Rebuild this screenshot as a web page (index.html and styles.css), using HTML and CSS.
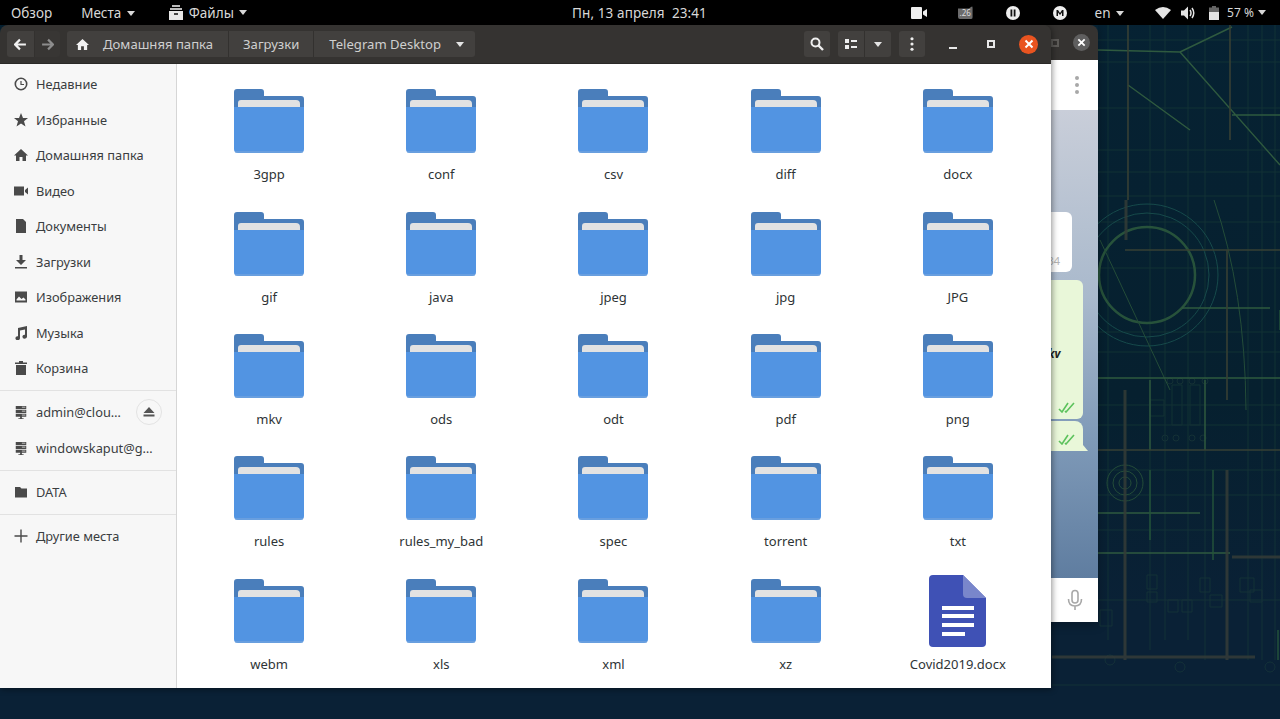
FILE: index.html
```html
<!DOCTYPE html>
<html lang="ru">
<head>
<meta charset="utf-8">
<title>Файлы</title>
<link rel="stylesheet" href="styles.css">
</head>
<body>
<svg class="defs" width="0" height="0">
  <defs>
    <filter id="soft"><feGaussianBlur stdDeviation="0.6"/></filter>
    <symbol id="folder" viewBox="0 0 70 64">
      <path d="M3 0H27Q30 0 30 3V7H67Q70 7 70 10V30H0V3Q0 0 3 0Z" fill="#4a7ebb"/>
      <path d="M7 11H62Q66 11 66 15V22H4V14Q4 11 7 11Z" fill="#e2e2e2"/>
      <path d="M0 18H70V60Q70 64 66 64H4Q0 64 0 60Z" fill="#5294e2"/>
      <path d="M1 63H69" stroke="#7fa9dc" stroke-width="1"/>
    </symbol>
    <symbol id="home" viewBox="0 0 14 14"><path d="M7 1 14 7.5H12V13H8.5V9H5.5V13H2V7.5H0Z" fill="currentColor"/></symbol>
    <symbol id="server" viewBox="0 0 14 16"><path d="M1 1H13V4.500H1ZM1 5.500H13V9H1ZM1 10H13V13.500H8V15H10V16H4V15H6V13.500H1Z" fill="currentColor"/><path d="M8 2.500H12M8 7H12M8 11.500H12" stroke="#f6f5f4" stroke-width=".8"/></symbol>
  </defs>
</svg>

<div class="desktop">
  <svg class="wallpaper" viewBox="0 0 1280 719" preserveAspectRatio="none" aria-hidden="true">
    <g filter="url(#soft)" fill="none" opacity=".72">
      <!-- faint drafting grid -->
      <g stroke="#24483f" stroke-width="1" opacity=".6">
        <path d="M1098 40H1280M1098 62H1280M1098 108H1280M1098 150H1280M1098 172H1280M1098 196H1280M1098 222H1280M1098 268H1280M1098 332H1280M1098 352H1280M1098 405H1280M1098 425H1280M1098 470H1280M1098 495H1280M1098 530H1280M1098 600H1280M1052 685H1280"/>
        <path d="M1108 25V640M1150 25V650M1165 25V640M1188 25V640M1205 25V660M1248 25V660M1262 25V660M1275 25V660"/>
        <path d="M1150 400h14v16h-14zM1172 385h10v40h-10zM1190 385h10v40h-10zM1147 575h10v14h-10zM1147 592h10v10h-10zM1168 600h10v12h-10zM1182 600h10v12h-10zM1200 578h10v14h-10zM1210 595h12v12h-12zM1240 578h14v14h-14zM1250 590h12v12h-12zM1100 610h12v16h-12z"/>
        <circle cx="1170" cy="381" r="3"/><circle cx="1180" cy="381" r="3"/><circle cx="1192" cy="381" r="3"/><circle cx="1205" cy="381" r="3"/>
        <circle cx="1165" cy="438" r="3"/><circle cx="1176" cy="438" r="3"/><circle cx="1192" cy="438" r="3"/><circle cx="1203" cy="438" r="3"/>
        <circle cx="1110" cy="660" r="5"/><circle cx="1180" cy="667" r="5"/><circle cx="1270" cy="667" r="5"/>
      </g>
      <!-- circles and green linework -->
      <g stroke="#1d5a55" stroke-width="1">
        <circle cx="1147" cy="275" r="71"/>
        <circle cx="1147" cy="275" r="62"/>
      </g>
      <circle cx="1147" cy="275" r="48" stroke="#35663f" stroke-width="2.500"/>
      <g stroke="#2f5d3c" stroke-width="1">
        <circle cx="1125" cy="483" r="18"/><circle cx="1125" cy="483" r="12"/><circle cx="1125" cy="483" r="6"/>
        <path d="M1100 240 1170 390M1214 200Q1245 290 1246 410"/>
      </g>
      <g stroke="#3f7044" stroke-width="1.400">
        <path d="M1180 52 1232 27M1180 52 1280 165M1128 85 1190 130M1180 52 1098 50M1232 115H1280M1182 308H1270M1098 378H1280M1098 513H1200M1098 553H1230"/>
        <path d="M1150 380V450M1205 380V450"/>
      </g>
      <g stroke="#2e6a3a" stroke-width="2" opacity=".7">
        <path d="M1213 470V560M1150 470V540M1280 310V330M1278 630V660"/>
      </g>
      <!-- olive / brown heavy beams -->
      <g stroke="#4a4c34" stroke-width="1.600">
        <path d="M1125 250H1280M1227 250V400M1128 25V200M1230 25V140M1098 450H1280"/>
      </g>
      <g stroke="#45473a" stroke-width="3" opacity=".85">
        <path d="M1125 390V660M1227 470V660M1052 657H1255M1232 557H1280M1126 200V240"/>
      </g>
    </g>
  </svg>

  <div class="topbar">
    <div class="top-left">
      <span class="top-item">Обзор</span>
      <span class="top-item">Места <i class="caret"></i></span>
      <span class="top-item top-app">
        <svg class="top-app-icon" viewBox="0 0 16 15"><path d="M4 0H12V2H4ZM2 3H14V5H2Z" fill="#bbb"/><path d="M1 6H15V15H1Z" fill="#e8e8e8"/><path d="M6 8H10V10H6Z" fill="#444"/></svg>
        Файлы <i class="caret"></i>
      </span>
    </div>
    <div class="top-clock">Пн, 13 апреля&nbsp; 23:41</div>
    <div class="top-right">
      <svg class="tray tray-cam" viewBox="0 0 16 12"><path d="M0 1Q0 0 1 0H10Q11 0 11 1V11Q11 12 10 12H1Q0 12 0 11ZM12 4.500 16 2V10L12 7.500Z" fill="#eee"/></svg>
      <span class="tray-drive"><span class="tray-drive-txt">.26</span></span>
      <svg class="tray tray-pause" viewBox="0 0 14 14"><circle cx="7" cy="7" r="7" fill="#eee"/><path d="M4.500 3.500H6.300V10.500H4.500ZM7.700 3.500H9.500V10.500H7.700Z" fill="#111"/></svg>
      <svg class="tray tray-m" viewBox="0 0 14 14"><circle cx="7" cy="7" r="7" fill="#eee"/><path d="M3.500 10V4H5L7 7 9 4H10.500V10H9V6.500L7 9 5 6.500V10Z" fill="#111"/></svg>
      <span class="top-item tray-lang">en <i class="caret"></i></span>
      <svg class="tray tray-wifi" viewBox="0 0 16 12"><path d="M0 3Q8 -3 16 3L8 12Z" fill="#e4e4e4"/></svg>
      <svg class="tray tray-vol" viewBox="0 0 15 14"><path d="M0 4.500H3L7 .5V13.500L3 9.500H0Z" fill="#e4e4e4"/><path d="M9 4Q11 7 9 10M11 2Q14.500 7 11 12" stroke="#e4e4e4" stroke-width="1.500" fill="none"/></svg>
      <svg class="tray tray-bat" viewBox="0 0 10 14"><path d="M3 0H7V1.500H10V6H0V1.500H3Z" fill="#666"/><path d="M0 6H10V14H0Z" fill="#e4e4e4"/></svg>
      <span class="top-item tray-pct">57 % <i class="caret"></i></span>
    </div>
  </div>

  <div class="tg-window">
    <div class="tg-head">
      <span class="tg-max"></span>
      <span class="tg-close">
        <svg viewBox="0 0 10 10"><path d="M1.500 1.500 8.500 8.500M8.500 1.500 1.500 8.500" stroke="#fff" stroke-width="2"/></svg>
      </span>
    </div>
    <div class="tg-title"><span class="tg-dots"><i></i><i></i><i></i></span></div>
    <div class="tg-chat">
      <div class="tg-bubble tg-in"><span class="tg-time">34</span></div>
      <div class="tg-bubble tg-out tg-large">
        <span class="tg-file">kv</span>
        <svg class="tg-check" viewBox="0 0 17 11"><path d="M1 7 4 10 10 1M7 9 8 10 16 1" stroke="#5cc25c" stroke-width="1.600" fill="none"/></svg>
      </div>
      <div class="tg-bubble tg-out tg-small">
        <svg class="tg-check" viewBox="0 0 17 11"><path d="M1 7 4 10 10 1M7 9 8 10 16 1" stroke="#5cc25c" stroke-width="1.600" fill="none"/></svg>
      </div>
    </div>
    <div class="tg-input">
      <svg class="tg-mic" viewBox="0 0 16 22"><path d="M8 1.500Q11 1.500 11 4.500V11Q11 14 8 14T5 11V4.500Q5 1.500 8 1.500Z" fill="none" stroke="#a8a8a8" stroke-width="1.600"/><path d="M1.500 10Q1.500 17 8 17T14.500 10M8 17V21" fill="none" stroke="#a8a8a8" stroke-width="1.600"/></svg>
    </div>
  </div>

  <div class="fm-window">
    <header class="fm-head">
      <div class="btn-group nav-group">
        <span class="btn nav-btn">
          <svg viewBox="0 0 12 12"><path d="M1 6H11M5.500 1.500 1 6 5.500 10.500" stroke="#f2f2f2" stroke-width="2" fill="none"/></svg>
        </span>
        <span class="btn nav-btn off">
          <svg viewBox="0 0 12 12"><path d="M1 6H11M6.500 1.500 11 6 6.500 10.500" stroke="#8d8d8d" stroke-width="2" fill="none"/></svg>
        </span>
      </div>
      <div class="btn-group path-group">
        <span class="btn crumb crumb-home"><svg class="crumb-icon"><use href="#home"/></svg>Домашняя папка</span>
        <span class="btn crumb">Загрузки</span>
        <span class="btn crumb crumb-last">Telegram Desktop<i class="caret"></i></span>
      </div>
      <div class="head-right">
        <span class="btn tool">
          <svg viewBox="0 0 14 14"><circle cx="5.500" cy="5.500" r="4" fill="none" stroke="#eee" stroke-width="2"/><path d="M8.500 8.500 13 13" stroke="#eee" stroke-width="2.400"/></svg>
        </span>
        <div class="btn-group view-group">
          <span class="btn tool">
            <svg viewBox="0 0 14 12"><path d="M1 1H5V5H1ZM1 7H5V11H1Z" fill="#eee"/><path d="M7 2H13V4H7ZM7 8H13V10H7Z" fill="#eee"/></svg>
          </span>
          <span class="btn tool-caret"><i class="caret"></i></span>
        </div>
        <span class="btn tool menu-btn">
          <svg viewBox="0 0 4 16"><circle cx="2" cy="2" r="1.800" fill="#eee"/><circle cx="2" cy="8" r="1.800" fill="#eee"/><circle cx="2" cy="14" r="1.800" fill="#eee"/></svg>
        </span>
        <div class="win-controls">
          <span class="win-btn"><i class="win-min"></i></span>
          <span class="win-btn"><i class="win-max"></i></span>
          <span class="win-btn win-close">
            <svg viewBox="0 0 10 10"><path d="M1.500 1.500 8.500 8.500M8.500 1.500 1.500 8.500" stroke="#fff" stroke-width="2"/></svg>
          </span>
        </div>
      </div>
    </header>
    <div class="fm-body">
      <nav class="sidebar">
        <a class="side-row"><svg class="side-icon" viewBox="0 0 14 14"><circle cx="7" cy="7" r="5.700" fill="none" stroke="#4a4a4a" stroke-width="1.600"/><path d="M7 4V7.500H10" fill="none" stroke="#4a4a4a" stroke-width="1.200"/></svg>Недавние</a>
        <a class="side-row"><svg class="side-icon" viewBox="0 0 14 14"><path d="M7 0 9 5H14L10 8.300 11.500 13.500 7 10.500 2.500 13.500 4 8.300 0 5H5Z" fill="#4a4a4a"/></svg>Избранные</a>
        <a class="side-row"><svg class="side-icon"><use href="#home"/></svg>Домашняя папка</a>
        <a class="side-row"><svg class="side-icon" viewBox="0 0 14 14"><path d="M0 2.500H10V11.500H0ZM11 6 14 3.500V10.500L11 8Z" fill="#4a4a4a"/></svg>Видео</a>
        <a class="side-row"><svg class="side-icon" viewBox="0 0 14 14"><path d="M2 0H9L12 3V14H2Z" fill="#4a4a4a"/></svg>Документы</a>
        <a class="side-row"><svg class="side-icon" viewBox="0 0 14 14"><path d="M5.500 0H8.500V5H12L7 10 2 5H5.500ZM1 12H13V13.500H1Z" fill="#4a4a4a"/></svg>Загрузки</a>
        <a class="side-row"><svg class="side-icon" viewBox="0 0 14 14"><path fill-rule="evenodd" d="M1 1.500H13V12.500H1ZM2.500 9.500 5 6.500 7.500 9 9.500 7.500 11.500 9.500V10.500H2.500Z" fill="#4a4a4a"/></svg>Изображения</a>
        <a class="side-row"><svg class="side-icon" viewBox="0 0 14 14"><path d="M4 2 13 0V10.500A2.300 2 0 1 1 11 8.700V3.500L6 4.500V12A2.300 2 0 1 1 4 10.200Z" fill="#4a4a4a"/></svg>Музыка</a>
        <a class="side-row"><svg class="side-icon" viewBox="0 0 14 14"><path d="M5 0H9V1.500H13V3H1V1.500H5ZM2 4H12V14H2Z" fill="#4a4a4a"/></svg>Корзина</a>
        <hr class="side-sep">
        <a class="side-row"><svg class="side-icon"><use href="#server"/></svg><span class="side-trunc">admin@clou…</span><span class="eject"><svg viewBox="0 0 12 10"><path d="M6 0 11.500 6H.5ZM.5 7.500H11.500V9.500H.5Z" fill="#555"/></svg></span></a>
        <a class="side-row"><svg class="side-icon"><use href="#server"/></svg>windowskaput@g…</a>
        <hr class="side-sep">
        <a class="side-row"><svg class="side-icon" viewBox="0 0 14 14"><path d="M1 2H6L7.500 3.500H13V12.500H1Z" fill="#4a4a4a"/></svg>DATA</a>
        <hr class="side-sep">
        <a class="side-row"><svg class="side-icon" viewBox="0 0 14 14"><path d="M7 .5V13.500M.5 7H13.500" stroke="#4a4a4a" stroke-width="1.400"/></svg>Другие места</a>
      </nav>
      <main class="file-grid">
        <div class="file"><svg class="folder"><use href="#folder"/></svg><span>3gpp</span></div>
        <div class="file"><svg class="folder"><use href="#folder"/></svg><span>conf</span></div>
        <div class="file"><svg class="folder"><use href="#folder"/></svg><span>csv</span></div>
        <div class="file"><svg class="folder"><use href="#folder"/></svg><span>diff</span></div>
        <div class="file"><svg class="folder"><use href="#folder"/></svg><span>docx</span></div>
        <div class="file"><svg class="folder"><use href="#folder"/></svg><span>gif</span></div>
        <div class="file"><svg class="folder"><use href="#folder"/></svg><span>java</span></div>
        <div class="file"><svg class="folder"><use href="#folder"/></svg><span>jpeg</span></div>
        <div class="file"><svg class="folder"><use href="#folder"/></svg><span>jpg</span></div>
        <div class="file"><svg class="folder"><use href="#folder"/></svg><span>JPG</span></div>
        <div class="file"><svg class="folder"><use href="#folder"/></svg><span>mkv</span></div>
        <div class="file"><svg class="folder"><use href="#folder"/></svg><span>ods</span></div>
        <div class="file"><svg class="folder"><use href="#folder"/></svg><span>odt</span></div>
        <div class="file"><svg class="folder"><use href="#folder"/></svg><span>pdf</span></div>
        <div class="file"><svg class="folder"><use href="#folder"/></svg><span>png</span></div>
        <div class="file"><svg class="folder"><use href="#folder"/></svg><span>rules</span></div>
        <div class="file"><svg class="folder"><use href="#folder"/></svg><span>rules_my_bad</span></div>
        <div class="file"><svg class="folder"><use href="#folder"/></svg><span>spec</span></div>
        <div class="file"><svg class="folder"><use href="#folder"/></svg><span>torrent</span></div>
        <div class="file"><svg class="folder"><use href="#folder"/></svg><span>txt</span></div>
        <div class="file"><svg class="folder"><use href="#folder"/></svg><span>webm</span></div>
        <div class="file"><svg class="folder"><use href="#folder"/></svg><span>xls</span></div>
        <div class="file"><svg class="folder"><use href="#folder"/></svg><span>xml</span></div>
        <div class="file"><svg class="folder"><use href="#folder"/></svg><span>xz</span></div>
        <div class="file">
          <svg class="doc" viewBox="0 0 57 72">
            <path d="M4 0H34L57 23V68Q57 72 53 72H4Q0 72 0 68V4Q0 0 4 0Z" fill="#3f51b5"/>
            <path d="M34 0 57 23H38Q34 23 34 19Z" fill="#7986cb"/>
            <path d="M13 31H45V35H13ZM13 39H45V43H13ZM13 48H45V52H13ZM13 57H36V61H13Z" fill="#fff"/>
          </svg>
          <span>Covid2019.docx</span>
        </div>
      </main>
    </div>
  </div>
</div>
</body>
</html>
```

FILE: styles.css
```css
* { box-sizing: border-box; }
html, body { margin: 0; height: 100%; overflow: hidden; }
body { font-family: "Noto Sans", "Open Sans", sans-serif; font-size: 13px; color: #2e3436; }
.defs { position: absolute; }
.desktop { position: relative; width: 1280px; height: 719px; background: #0a2136; overflow: hidden; }
.wallpaper { position: absolute; inset: 0; width: 100%; height: 100%; background: linear-gradient(#062233 0%, #06202f 55%, #0a2136 85%); }

.caret { display: inline-block; width: 0; height: 0; border-left: 4.5px solid transparent; border-right: 4.5px solid transparent; border-top: 5px solid currentColor; vertical-align: 2px; margin-left: 2px; }

.topbar { position: absolute; top: 0; left: 0; right: 0; height: 25px; background: #000; color: #d8d8d8; display: grid; grid-template-columns: 1fr auto 1fr; align-items: center; font-size: 13.5px; }
.top-left { display: flex; align-items: center; padding-left: 11px; gap: 29px; }
.top-item { white-space: nowrap; }
.top-app { display: flex; align-items: center; gap: 5px; margin-left: 4px; }
.top-app .caret { margin-left: 0; }
.top-app-icon { width: 16px; height: 15px; }
.top-clock { letter-spacing: .1px; margin-left: -1px; }
.top-right { display: flex; align-items: center; justify-content: flex-end; padding-right: 14px; }
.tray { display: block; flex: none; }
.tray-cam { width: 16px; height: 12px; margin-right: 31px; }
.tray-drive { width: 15px; height: 13px; background: #6b6b6b; border-radius: 2px; margin-right: 33px; position: relative; display: block; clip-path: polygon(0 20%, 75% 20%, 100% 0, 100% 100%, 0 100%); }
.tray-drive-txt { position: absolute; left: 2px; top: 0; font-size: 8px; color: #ddd; line-height: 14px; }
.tray-pause { width: 14px; height: 14px; margin-right: 33px; }
.tray-m { width: 14px; height: 14px; margin-right: 28px; }
.tray-lang { margin-right: 31px; }
.tray-wifi { width: 16px; height: 12px; margin-right: 10px; }
.tray-vol { width: 15px; height: 14px; margin-right: 13px; }
.tray-bat { width: 10px; height: 14px; margin-right: 8px; }
.tray-pct { font-size: 12px; }
.tray-pct .caret { margin-left: 1px; }

.tg-window { position: absolute; left: 1040px; top: 25px; width: 58px; height: 597px; display: flex; flex-direction: column; box-shadow: 0 2px 10px rgba(0,0,0,.3); }
.tg-head { height: 35px; background: #353331; border-radius: 0 8px 0 0; display: flex; align-items: center; justify-content: flex-end; padding-right: 8px; gap: 14px; flex: none; }
.tg-max { width: 8px; height: 8px; border: 2px solid #5d5b58; }
.tg-close { width: 17px; height: 17px; border-radius: 50%; background: #5f5f5f; display: flex; align-items: center; justify-content: center; }
.tg-close svg { width: 9px; height: 9px; }
.tg-title { height: 50px; background: #fff; display: flex; justify-content: flex-end; align-items: center; padding-right: 19px; flex: none; }
.tg-dots { display: flex; flex-direction: column; gap: 3px; }
.tg-dots i { width: 4px; height: 4px; border-radius: 50%; background: #a8a8a8; display: block; }
.tg-chat { flex: 1; position: relative; background: linear-gradient(#c9ced9 0%, #a9b9cc 40%, #7f9ab8 70%, #5f7da0 100%); }
.tg-bubble { position: absolute; }
.tg-in { left: 0; top: 102px; width: 32px; height: 60px; background: #fff; border-radius: 0 6px 6px 0; }
.tg-time { position: absolute; right: 12px; bottom: 4px; font-size: 11px; color: #b5b5b5; }
.tg-out { left: 0; width: 43px; background: #e9f7d9; }
.tg-large { top: 170px; height: 139px; border-radius: 0 6px 6px 0; }
.tg-small { top: 311px; height: 30px; border-radius: 0 8px 0 0; }
.tg-small::after { content: ""; position: absolute; left: 43px; bottom: 0; border-bottom: 6px solid #e9f7d9; border-right: 5px solid transparent; }
.tg-file { position: absolute; left: 8px; top: 66px; font-size: 11.5px; font-weight: 700; font-style: italic; color: #222; }
.tg-check { position: absolute; right: 8px; bottom: 6px; width: 17px; height: 11px; }
.tg-input { height: 44px; background: #fff; display: flex; justify-content: flex-end; align-items: center; padding-right: 15px; flex: none; }
.tg-mic { width: 16px; height: 22px; }

.fm-window { position: absolute; left: 0; top: 25px; width: 1051px; height: 663px; display: flex; flex-direction: column; border-radius: 8px 8px 0 0; overflow: hidden; box-shadow: 1px 1px 6px rgba(0,0,0,.45); }
.fm-head { height: 39px; flex: none; background: #353331; display: flex; align-items: center; padding: 0 0 0 7px; gap: 7px; color: #cfcfcf; font-size: 13.1px; border-bottom: 1px solid #2a2927; }
.btn-group { display: flex; height: 26px; }
.btn { background: #42403e; display: flex; align-items: center; height: 26px; }
.btn-group .btn + .btn { border-left: 1px solid #33312f; }
.btn-group .btn:first-child { border-radius: 3px 0 0 3px; }
.btn-group .btn:last-child { border-radius: 0 3px 3px 0; }
.nav-btn { width: 27px; justify-content: center; }
.nav-btn.off { background: #383634; width: 26px; }
.nav-btn svg { width: 13px; height: 13px; }
.crumb { padding: 0 14px; white-space: nowrap; }
.crumb-home { padding: 0 15px 0 9px; }
.crumb-icon { width: 13px; height: 13px; color: #f2f2f2; margin-right: 14px; }
.crumb-last { padding: 0 11px 0 15px; }
.crumb-last .caret { margin-left: 15px; color: #e4e4e4; }
.head-right { margin-left: auto; display: flex; align-items: center; }
.tool { width: 26px; justify-content: center; border-radius: 3px; }
.tool svg { width: 14px; height: 14px; }
.view-group { margin-left: 8px; }
.view-group .tool { border-radius: 3px 0 0 3px; }
.tool-caret { width: 27px; justify-content: center; color: #e4e4e4; }
.tool-caret .caret { margin: 0; }
.menu-btn { margin-left: 8px; }
.menu-btn svg { width: 4px; height: 14px; }
.win-controls { display: flex; align-items: center; margin-left: 9px; padding-right: 13px; }
.win-btn { width: 38px; height: 26px; display: flex; align-items: center; justify-content: center; }
.win-min { width: 8px; height: 2px; background: #e8e8e8; display: block; margin-top: 7px; }
.win-max { width: 8px; height: 8px; border: 2px solid #e8e8e8; display: block; }
.win-close { width: 19px; margin-left: 9px; height: 19px; border-radius: 50%; background: #e95420; }
.win-close svg { width: 10px; height: 10px; }

.fm-body { flex: 1; display: flex; min-height: 0; background: #fff; }
.sidebar { width: 177px; flex: none; background: #f7f7f7; border-right: 1px solid #d6d6d6; padding-top: 2.5px; font-size: 12.8px; color: #3a3d3f; display: flex; flex-direction: column; }
.side-row { height: 35.5px; flex: none; display: flex; align-items: center; padding-left: 14px; white-space: nowrap; }
.side-icon { width: 14px; height: 14px; margin-right: 8px; flex: none; color: #4a4a4a; }
.side-trunc { flex: 1; }
.eject { width: 26px; height: 26px; border-radius: 50%; border: 1px solid #e3e3e3; display: flex; align-items: center; justify-content: center; margin-right: 14px; }
.eject svg { width: 12px; height: 10px; }
.side-sep { margin: 4px 0 3.5px; border: 0; height: 1px; background: #e2e2e2; flex: none; }

.file-grid { flex: 1; display: grid; grid-template-columns: repeat(5, 172.2px); grid-auto-rows: 122.4px; padding: 24.3px 0 0 6px; align-content: start; }
.file { display: flex; flex-direction: column; align-items: center; font-size: 13px; color: #2e3436; position: relative; }
.file span { margin-top: 11px; line-height: 20px; white-space: nowrap; }
.folder { width: 70px; height: 64px; margin-top: 1px; display: block; flex: none; }
.doc { width: 57px; height: 72px; margin-top: -3px; margin-bottom: -4px; display: block; flex: none; }
```
